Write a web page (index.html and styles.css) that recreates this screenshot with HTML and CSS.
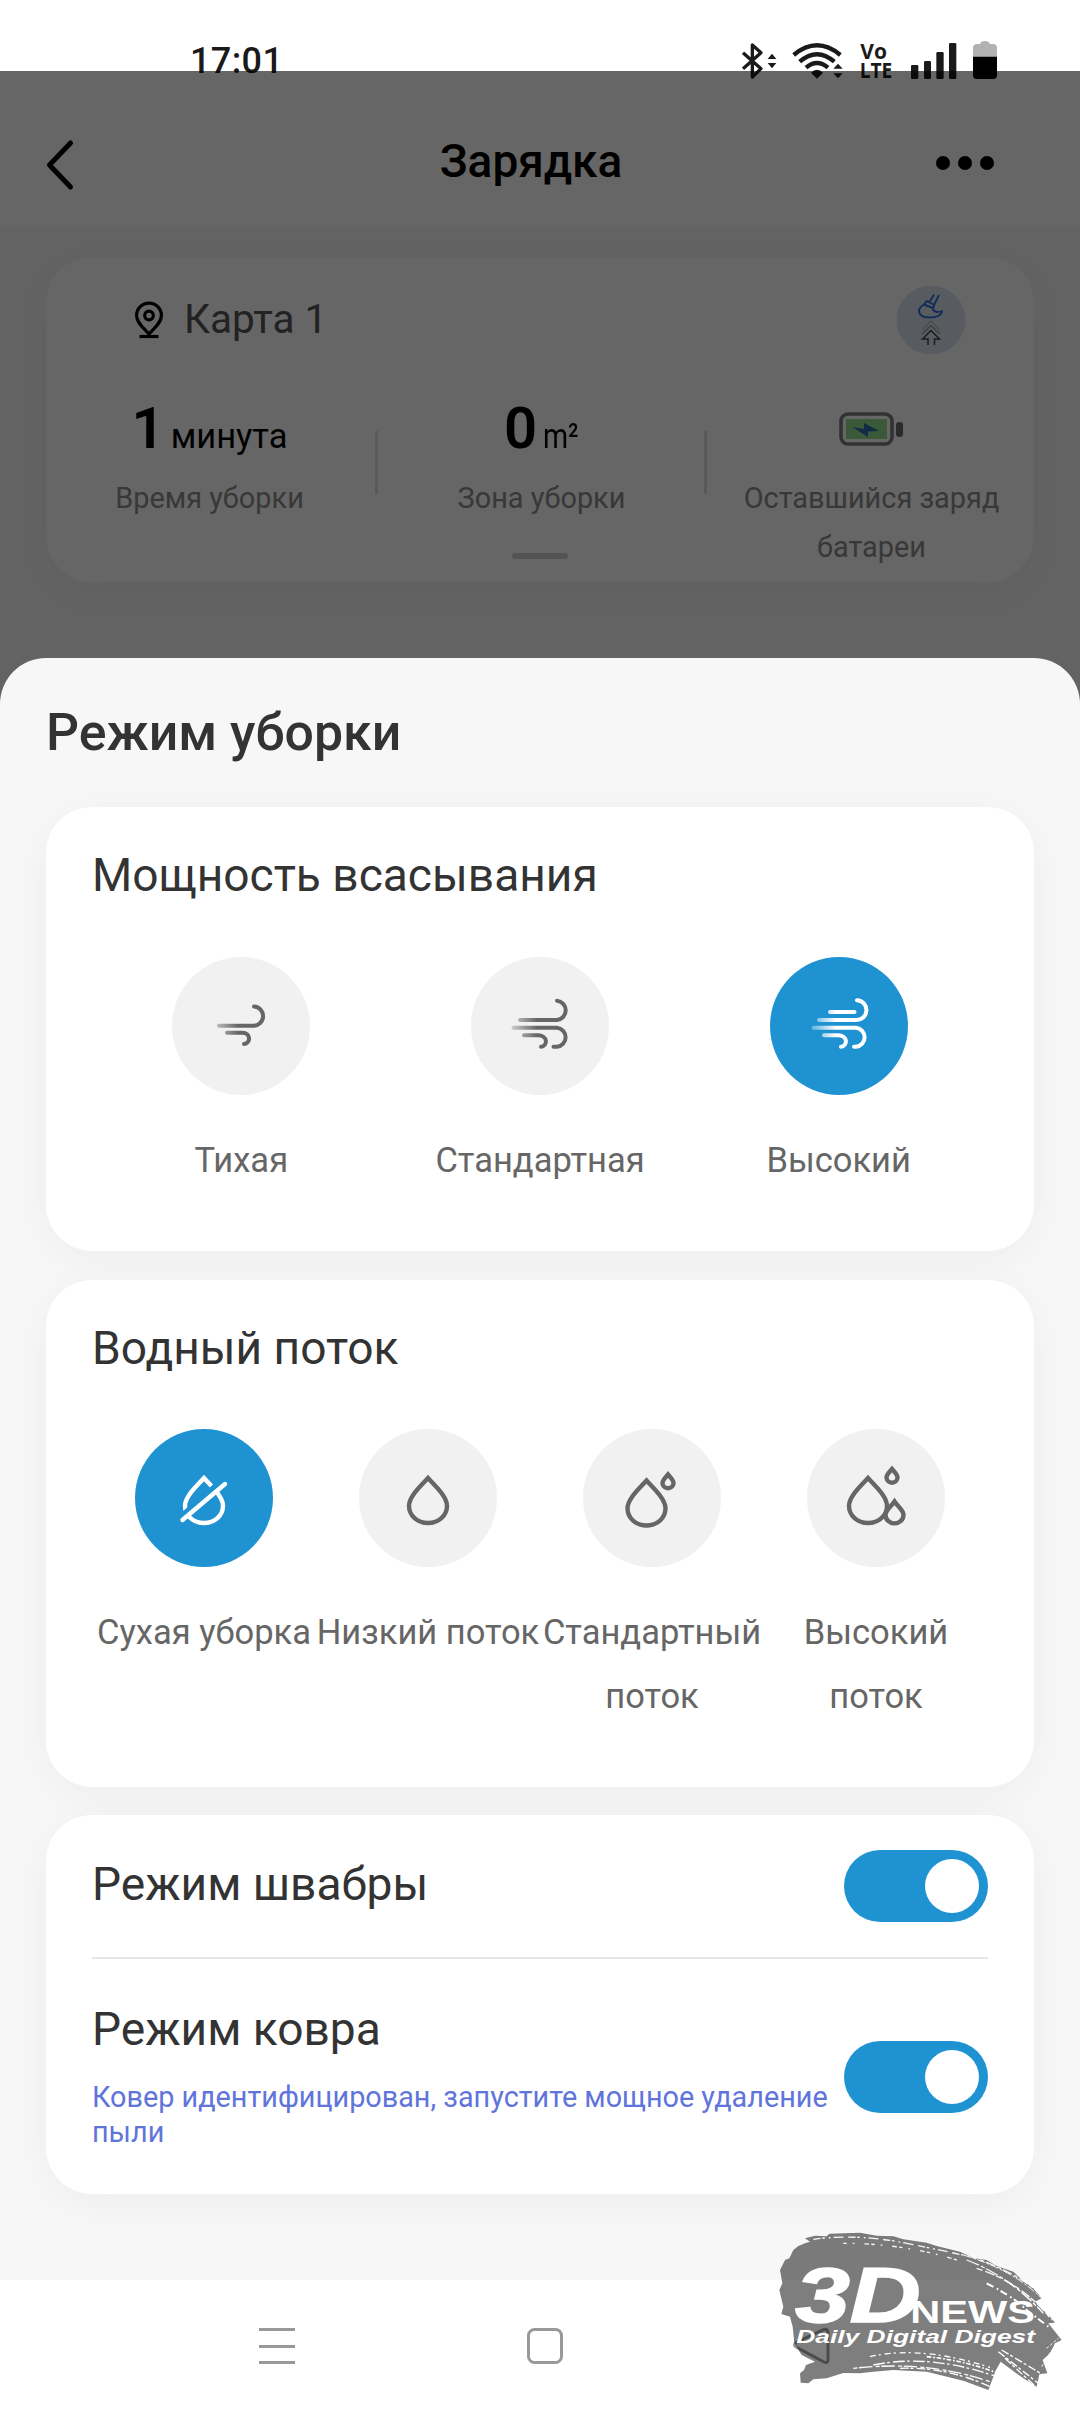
FILE: index.html
```html
<!DOCTYPE html>
<html lang="ru">
<head>
<meta charset="utf-8">
<title>Режим уборки</title>
<link rel="stylesheet" href="styles.css">
</head>
<body>
<svg class="defs" width="0" height="0" aria-hidden="true">
  <defs>
    <linearGradient id="gray-fade" gradientUnits="userSpaceOnUse" x1="40" y1="0" x2="66" y2="0">
      <stop offset="0" stop-color="#666" stop-opacity=".25"/><stop offset="1" stop-color="#666"/>
    </linearGradient>
    <linearGradient id="white-fade" gradientUnits="userSpaceOnUse" x1="40" y1="0" x2="66" y2="0">
      <stop offset="0" stop-color="#fff" stop-opacity=".25"/><stop offset="1" stop-color="#fff"/>
    </linearGradient>
    <path id="drop" d="M69 49C61 58 50 67.500 50 77C50 86.500 58.500 94 69 94S88 86.500 88 77C88 67.500 77 58 69 49Z"/>
    <path id="droplet" d="M85 45.500C82 49 79.500 51 79.500 54A5.500 5.200 0 0 0 90.500 54C90.500 51 88 49 85 45.500Z"/>
  </defs>
</svg>
<div class="phone">
  <div class="status">
    <span class="clock">17:01</span>
    <svg class="status-icons" viewBox="0 0 900 240">
      <g fill="none" stroke="#1a1a1a" stroke-width="10" stroke-linejoin="round">
        <path d="M69 98L123 146L97 171V75L123 98L69 146"/>
        <g stroke-width="13"><path d="M221 105Q291 47 361 105"/><path d="M239 125Q291 80 343 125"/><path d="M258 143Q291 115 324 143"/></g>
      </g>
      <g fill="#1a1a1a">
        <path d="M156 101L169 117H143ZM156 145L169 129H143ZM354 131L368 146H340ZM354 175L368 160H340ZM291 176L273 158Q291 141 309 158Z"/>
        <rect x="573" y="135" width="22" height="42" rx="4"/><rect x="612" y="123" width="21" height="54" rx="4"/><rect x="649" y="96" width="22" height="81" rx="4"/><rect x="687" y="69" width="22" height="108" rx="4"/>
        <text class="carrier" x="421" y="116" textLength="80" lengthAdjust="spacingAndGlyphs">Vo</text>
        <text class="carrier" x="419" y="175" textLength="98" lengthAdjust="spacingAndGlyphs">LTE</text>
      </g>
      <path d="M759 111V84Q759 72 772 72H780Q783 63 795 63T810 72H818Q831 72 831 84V111Z" fill="#b2b2b2"/>
      <path d="M759 110H831V166Q831 177 820 177H770Q759 177 759 166Z"/>
    </svg>
  </div>
  <header class="topbar">
    <svg class="back" viewBox="0 0 30 52"><path d="M25.500 4L4.500 26L25.500 48" fill="none" stroke="#000" stroke-width="5" stroke-linecap="round" stroke-linejoin="round"/></svg>
    <h1>Зарядка</h1>
    <span class="more"><i></i><i></i><i></i></span>
  </header>
  <main class="home">
    <section class="info">
      <div class="map-row">
        <svg class="pin" viewBox="0 0 32 38"><g fill="none" stroke="#000" stroke-width="3.200"><path d="M16 33C11 27 3.600 22 3.600 14.500A12.400 12.400 0 0 1 28.400 14.500C28.400 22 21 27 16 33Z"/><circle cx="16" cy="14.500" r="4.300"/><path d="M6.500 35.500H25.500"/></g></svg>
        <span class="map-name">Карта 1</span>
        <svg class="badge" viewBox="0 0 70 70"><circle cx="35" cy="35" r="34.500" fill="#dce6f3"/>
          <g fill="none" stroke="#2f6fd8" stroke-width="1.900" stroke-linejoin="round"><path d="M33.500 17L38 9.500M38.500 19L43 10M30.500 16L38.500 20L37 23L28 19.500ZM28 19.500C22 23 21.500 28 26 31C29 33 38 33 42 31Q46 29 46 26Q39 29 36 23"/></g>
          <path d="M32 60V54H26.500L35 45.500L43.500 54H38.500V60" fill="none" stroke="#444" stroke-width="1.500"/><path d="M26 49L35 40.500L44 49" fill="none" stroke="#999" stroke-width="1.300"/><path d="M26 45L35 36L44 45" fill="none" stroke="#bbb" stroke-width="1.300"/></svg>
      </div>
      <div class="stats">
        <div class="stat time"><div class="value"><b>1</b><span>минута</span></div><p>Время уборки</p></div>
        <div class="stat area"><div class="value"><b>0</b><span>m²</span></div><p>Зона уборки</p></div>
        <div class="stat"><div class="value cell"><svg viewBox="0 0 66 36"><rect x="2" y="3" width="51" height="30" rx="7" fill="none" stroke="#7e7e82" stroke-width="3.600"/><rect x="7" y="8" width="41" height="20" fill="#92de8c"/><path d="M13 16L25 18V12L40 20L29 20.500V26Z" fill="#2f6dac"/><rect x="57" y="11" width="7" height="15" rx="3" fill="#6c6c70"/></svg></div><p>Оставшийся заряд батареи</p></div>
      </div>
      <i class="handle"></i>
    </section>
  </main>
  <div class="scrim"></div>
  <section class="sheet">
    <h2>Режим уборки</h2>
    <div class="card suction">
      <h3>Мощность всасывания</h3>
      <div class="options">
        <div class="option"><svg class="dial" viewBox="0 0 138 138"><g class="wind" stroke="url(#gray-fade)"><path d="M47 68.700H81A9.600 9.600 0 0 0 82 49.500"/><path d="M55 75.700H70.500C79 75.700 79 86.700 72 87"/></g></svg><span>Тихая</span></div>
        <div class="option"><svg class="dial" viewBox="0 0 138 138"><g class="wind" stroke="url(#gray-fade)"><path d="M49 63H86A9.700 9.700 0 0 0 86 43.700"/><path d="M42.500 70.700H86A9.600 9.600 0 0 1 86 89.800H82.500"/><path d="M53 78.300H67C77 78.300 77 89 70 89.800"/></g></svg><span>Стандартная</span></div>
        <div class="option on"><svg class="dial" viewBox="0 0 138 138"><g class="wind" stroke="url(#white-fade)"><path d="M60 55L84.500 55.010"/><path d="M49 63H86A9.900 9.900 0 0 0 87 43.200"/><path d="M43.500 70.700H86A9.600 9.600 0 0 1 86 89.800H84"/><path d="M54 78.300H68C78 78.300 78 89 71 89.800"/></g></svg><span>Высокий</span></div>
      </div>
    </div>
    <div class="card water">
      <h3>Водный поток</h3>
      <div class="options">
        <div class="option on"><svg class="dial" viewBox="0 0 138 138"><g class="drops"><use href="#drop"/><path class="gap" d="M46 88L90 49"/><path d="M47.500 91L90 55" stroke-linecap="round"/></g></svg><span>Сухая уборка</span></div>
        <div class="option"><svg class="dial" viewBox="0 0 138 138"><g class="drops"><use href="#drop"/></g></svg><span>Низкий поток</span></div>
        <div class="option"><svg class="dial" viewBox="0 0 138 138"><g class="drops"><use href="#drop" x="-5.500" y="2.500"/><use href="#droplet"/></g></svg><span>Стандартный поток</span></div>
        <div class="option"><svg class="dial" viewBox="0 0 138 138"><g class="drops"><use href="#drop" x="-8"/><use href="#droplet" y="-5.500"/><path d="M87.500 72.500C84 78 78.500 81 78.500 86A8.800 8.200 0 0 0 96.500 86C96.500 81 91 78 87.500 72.500Z" fill="#f1f1f1"/></g></svg><span>Высокий поток</span></div>
      </div>
    </div>
    <div class="card toggles">
      <div class="row mop"><h3>Режим швабры</h3><span class="switch"></span></div>
      <div class="row carpet"><div><h3>Режим ковра</h3><p>Ковер идентифицирован, запустите мощное удаление пыли</p></div><span class="switch"></span></div>
    </div>
  </section>
  <nav class="navbar">
    <svg viewBox="0 0 40 40"><path d="M2 3.500H38M2 20.500H38M2 36.500H38"/></svg>
    <svg viewBox="0 0 40 40"><rect x="3.500" y="3.500" width="33" height="33" rx="6"/></svg>
    <svg viewBox="0 0 40 40"><path d="M4 16.500L32 3.500Q36 2.500 36 7V33Q36 38 32 36L4 21Q1 19 4 16.500Z"/></svg>
  </nav>
  <svg class="watermark" viewBox="0 0 960 606">
    <defs>
      <mask id="brush">
        <path fill="#fff" d="M135 85L165 77 200 79 208 71 300 68 350 77 400 79 430 88 500 98 530 108 600 125 640 144 680 150 710 168 760 185 790 213 820 235 845 265 825 275 870 320 885 338 865 340 905 390 885 400 870 430 848 450 862 490 838 493 830 530 790 505 722 455 708 480 685 540 610 512 500 485 400 480 340 485 300 490 250 489 200 505 160 508 145 520 122 518 120 490 132 480 138 465 165 455 125 435 103 400 98 350 90 320 64 312 70 290 58 240 67 220 60 180 75 150 88 145 100 120 115 108 135 100 150 95Z"/>
        <g fill="none" stroke="#000" stroke-width="4">
          <path d="M160 88Q290 70 440 100T650 145" stroke-dasharray="22 5 8 12 5 9 30 14"/>
          <path d="M250 100Q430 100 590 150" stroke-dasharray="10 18 5 30 14 7"/>
          <path d="M610 135Q760 180 845 265" stroke-width="3" stroke-dasharray="25 6 8 4"/>
          <path d="M620 150Q750 200 850 310" stroke-dasharray="40 7 12 5"/>
          <path d="M660 150Q770 190 840 250" stroke-dasharray="12 6 30 8"/>
          <path d="M650 175Q790 220 875 330" stroke-dasharray="18 9 30 5"/>
          <path d="M680 220Q760 260 800 300L865 350" stroke-width="6" stroke-dasharray="22 12 5 8"/>
          <path d="M330 440Q480 405 690 472" stroke-dasharray="18 9 6 12"/>
          <path d="M340 465Q510 430 710 500" stroke-dasharray="35 7 8 10"/>
          <path d="M280 475Q500 450 690 515" stroke-dasharray="12 5 40 10"/>
          <path d="M500 440Q610 450 715 490" stroke-width="5" stroke-dasharray="14 6 5 5"/>
          <path d="M420 475Q560 470 690 530" stroke-dasharray="26 5 9 10"/>
          <path d="M715 425L835 520M725 420L850 495M735 445L825 528" stroke-dasharray="24 6 9 8"/>
          <path d="M860 415L895 385M845 470L875 420" stroke-width="3" stroke-dasharray="8 6"/>
        </g>
      </mask>
    </defs>
    <rect width="960" height="606" fill="#000" opacity=".5" mask="url(#brush)"/>
    <g fill="#fff">
      <text class="logo-big" x="106" y="337" textLength="376" lengthAdjust="spacingAndGlyphs">3D</text>
      <text class="logo-news" x="451" y="339" textLength="374" lengthAdjust="spacingAndGlyphs">NEWS</text>
      <text class="logo-tag" x="109" y="398" textLength="716" lengthAdjust="spacingAndGlyphs">Daily Digital Digest</text>
    </g>
  </svg>
</div>
</body>
</html>
```

FILE: styles.css
```css
* { box-sizing: border-box; margin: 0; padding: 0; }
body { width: 1080px; font-family: Roboto, "Noto Sans", sans-serif; color: #333; background: #fff; }
svg { display: block; flex: none; }
.defs { position: absolute; }
.phone { position: relative; width: 1080px; height: 2412px; overflow: hidden; display: flex; flex-direction: column; background: #f7f7f7; }

.status { height: 100px; background: #fff; display: flex; justify-content: space-between; padding: 20px 60px 0 190px; flex: none; }
.clock { font-size: 36px; font-weight: 500; line-height: 42px; padding-top: 20px; color: #1a1a1a; letter-spacing: .4px; }
.status-icons { width: 300px; height: 80px; }
.carrier { font: 700 62px "Open Sans", sans-serif; }

.topbar { height: 127px; background: #fff; display: grid; grid-template-columns: 180px 1fr 180px; align-items: center; flex: none; }
.back { width: 30px; height: 52px; margin-left: 45px; margin-top: 2px; }
h1 { font-size: 46px; font-weight: 500; line-height: 54px; text-align: center; color: #000; margin: -5px 0 0 -18px; }
.more { display: flex; gap: 8px; margin: -2px 0 0 36px; }
.more i { width: 14px; height: 14px; border-radius: 50%; background: #000; }

.home { height: 431px; padding: 30px 46px 0; flex: none; }
.info { height: 325px; border-radius: 46px; background: #fff; box-shadow: 0 10px 40px rgba(0,0,0,.035); display: flex; flex-direction: column; align-items: center; }
.map-row { display: flex; align-items: center; width: 100%; height: 124px; padding: 0 68px 0 87px; }
.pin { width: 32px; height: 38px; margin-top: 1px; }
.map-name { flex: 1; font-size: 40.500px; line-height: 48px; color: #555; margin-left: 19px; }
.badge { width: 70px; height: 70px; margin-top: 1px; }
.stats { display: flex; width: 100%; height: 172px; position: relative; }
.stat { flex: 1; text-align: center; background: linear-gradient(#dcdee2, #dcdee2) right 50px / 3px 63px no-repeat; }
.stat:last-child { background: none; }
.stat.time { padding-right: 5px; }
.stat.area { padding-right: 2px; }
.value { height: 83px; padding-top: 16px; display: flex; justify-content: center; align-items: baseline; gap: 6px; color: #000; line-height: 62px; }
.value b { font-size: 58px; font-weight: 600; }
.value span { font-size: 34.500px; }
.area .value span { transform: scaleX(.83); transform-origin: left; margin-right: -7px; }
.value.cell { padding: 30px 0 0 3px; }
.cell svg { width: 66px; height: 36px; }
.stat p { font-size: 28.900px; line-height: 49px; color: #8c8c8c; padding: 10px 0 0; }
.stat:last-child p { padding: 10px 30px 0; margin-right: -2px; }
.handle { width: 56px; height: 6px; border-radius: 3px; background: #d0d0d0; }
.scrim { position: absolute; top: 71px; left: 0; width: 100%; height: 660px; background: rgba(0,0,0,.6); }

.sheet { position: relative; height: 1622px; background: #f7f7f7; border-radius: 46px 46px 0 0; padding: 45px 46px 0; flex: none; }
h2 { font-size: 51.800px; font-weight: 500; line-height: 60px; height: 104px; }
h3 { font-size: 46.100px; font-weight: 400; line-height: 54px; }
.card { background: #fff; border-radius: 46px; box-shadow: 0 8px 40px rgba(0,0,0,.045); padding: 0 46px; }
.suction { height: 444px; padding-top: 41px; }
.water { height: 507px; padding-top: 41px; margin-top: 29px; }
.options { display: flex; margin-top: 55px; }
.water .options { margin-top: 54px; }
.option { flex: 1 1 0; min-width: 0; display: flex; flex-direction: column; align-items: center; }
.option span { font-size: 34.500px; line-height: 64px; margin-top: 33px; text-align: center; color: #666; }
.dial { width: 138px; height: 138px; border-radius: 50%; background: #f1f1f1; }
.on .dial { background: #1f93d2; }
.wind { fill: none; stroke-width: 4; stroke-linecap: round; }
.drops { fill: none; stroke: #666; stroke-width: 4.400; stroke-linejoin: miter; }
.on .drops { stroke: #fff; }
.on .gap { stroke: #1f93d2; stroke-width: 6; }

.toggles { height: 379px; margin-top: 28px; }
.row { display: flex; justify-content: space-between; }
.mop { height: 144px; border-bottom: 2px solid #e6e6e6; align-items: center; }
.mop h3 { margin-top: -4px; }
.carpet { padding-top: 43px; }
.carpet p { font-size: 28.800px; line-height: 34.500px; color: #6074dc; width: 750px; margin-top: 24px; }
.switch { width: 144px; height: 72px; border-radius: 36px; background: #1f93d2; padding: 9px; display: flex; justify-content: flex-end; flex: none; }
.switch::after { content: ""; width: 54px; height: 54px; border-radius: 50%; background: #fff; }
.carpet .switch { margin-top: 39px; margin-left: -10px; }

.navbar { height: 132px; background: #fff; display: flex; justify-content: space-between; padding: 46px 248px 0 257px; flex: none; }
.navbar svg { width: 40px; height: 40px; fill: none; stroke: #999; stroke-width: 3; }
.watermark { position: absolute; left: 760px; top: 2210px; width: 320px; height: 202px; }
.logo-big { font: italic 700 232px "Liberation Sans", sans-serif; stroke: #fff; stroke-width: 5; }
.logo-news { font: 700 96px "Liberation Sans", sans-serif; }
.logo-tag { font: italic 700 57px "Liberation Sans", sans-serif; }
```
